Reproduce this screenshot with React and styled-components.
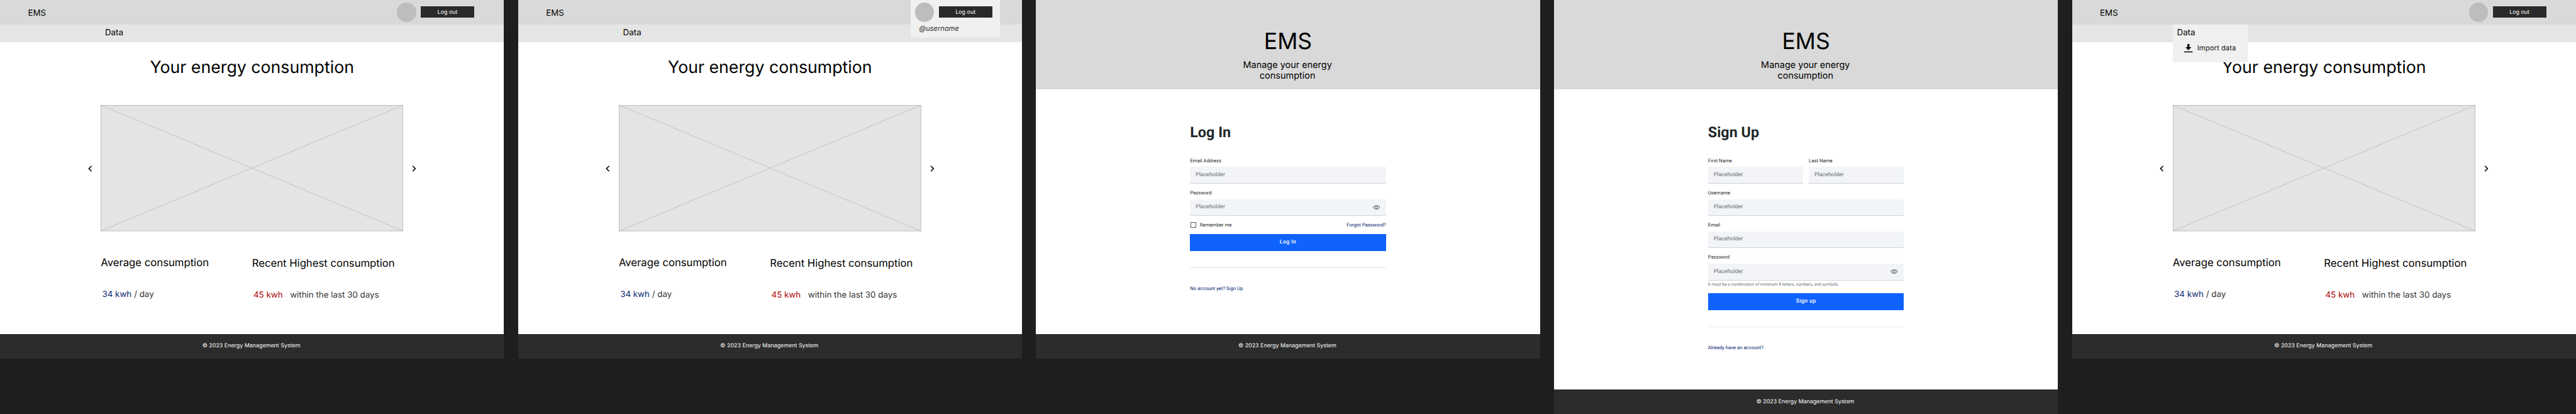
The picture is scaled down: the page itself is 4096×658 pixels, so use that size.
import React from 'react';
import styled, { createGlobalStyle, css } from 'styled-components';

// Screens are designed on a 1440px grid and drawn at a reduced board scale.
const SCALE = 4096 / 7360;
const u = (n) => `${(n * SCALE).toFixed(4)}px`;

const inter = `Inter, "Liberation Sans", sans-serif`;
const roboto = `Roboto, "Liberation Sans", sans-serif`;

const GlobalStyle = createGlobalStyle`
  *, *::before, *::after { box-sizing: border-box; }
  html, body { margin: 0; background: #1e1e1e; }
  body { overflow: hidden; text-rendering: geometricPrecision; }
  h1, h2, p { margin: 0; font-weight: 400; }
  button, input { font: inherit; border: 0; border-radius: 0; padding: 0; margin: 0; text-rendering: inherit; }
`;

const text = (size, line) => css`
  font-size: ${u(size)};
  line-height: ${u(line)};
  white-space: nowrap;
`;

const Board = styled.div`
  display: flex;
  align-items: flex-start;
  gap: ${u(40)};
  width: 4096px;
  height: 658px;
  overflow: hidden;
  background: #1e1e1e;
  font-family: ${inter};
  color: #000;
`;

const Frame = styled.section`
  position: relative;
  display: flex;
  flex-direction: column;
  flex: none;
  width: ${u(1440)};
  height: ${(p) => u(p.$height || 1024)};
  background: #fff;
`;

const Footer = styled.footer`
  display: flex;
  align-items: center;
  justify-content: center;
  height: ${u(70)};
  margin-top: auto;
  padding: 0 ${u(4)} ${u(2)} 0;
  background: #2c2c2c;
  color: #fff;
  ${text(16, 20)}
`;

/* ---------- dashboard ---------- */

const TopBar = styled.header`
  display: flex;
  align-items: center;
  justify-content: space-between;
  height: ${u(70)};
  padding: 0 ${u(85)} 0 ${u(80)};
  background: #d9d9d9;
`;

const Brand = styled.div`
  padding-top: ${u(4)};
  ${text(24, 29)}
`;

const AccountRow = styled.div`
  display: flex;
  align-items: flex-start;
  gap: ${u(13)};
  height: ${u(70)};
  padding-top: ${u(8)};
`;

const Avatar = styled.div`
  width: ${u(55)};
  height: ${u(55)};
  border-radius: 50%;
  background: #bdbdbd;
`;

const LogoutButton = styled.button`
  width: ${u(153)};
  height: ${u(33)};
  margin-top: ${u(10)};
  padding-top: ${u(2.5)};
  background: #2a2a2a;
  color: #fff;
  font-family: ${inter};
  ${text(16, 20)}
`;

const AccountMenu = styled.div`
  position: absolute;
  top: 0;
  right: ${u(63)};
  width: ${u(256)};
  height: ${u(107)};
  padding-left: ${u(13)};
  background: #f0f0f0;
`;

const Username = styled.p`
  padding-left: ${u(12)};
  font-style: italic;
  color: #2c2c2c;
  ${text(20, 24)}
`;

const SubNav = styled.nav`
  display: flex;
  align-items: center;
  height: ${u(50)};
  padding-left: ${u(300)};
  background: #e5e5e5;
`;

const NavItem = styled.div`
  ${text(24, 50)}
`;

const DataMenu = styled.div`
  position: absolute;
  top: ${u(70)};
  left: ${u(288)};
  width: ${u(214)};
  height: ${u(107)};
  padding-left: ${u(12)};
  background: #f0f0f0;
`;

const MenuItem = styled.div`
  display: flex;
  align-items: center;
  gap: ${u(14)};
  height: ${u(24)};
  margin: ${u(6)} 0 0 ${u(20)};
  letter-spacing: ${u(0.2)};
  color: #111;
  ${text(20, 24)}
`;

const Glyph = styled.svg`
  display: block;
  flex: none;
  width: ${(p) => u(p.$w)};
  height: ${(p) => u(p.$h)};
  overflow: visible;
`;

const Title = styled.h1`
  margin-top: ${u(43)};
  text-align: center;
  ${text(48, 58)}
`;

const Carousel = styled.div`
  display: flex;
  align-items: center;
  justify-content: center;
  gap: ${u(25)};
  margin-top: ${u(80)};
`;

const Stats = styled.div`
  display: grid;
  grid-template-columns: 1fr 1fr;
  width: ${u(864)};
  margin: ${u(72)} auto 0;
`;

const Stat = styled.div`
  padding-top: ${(p) => u(p.$drop || 0)};
`;

const StatTitle = styled.h2`
  ${text(30, 36)}
`;

const StatValue = styled.p`
  display: flex;
  gap: ${(p) => u(p.$gap)};
  margin-top: ${u(58)};
  padding-left: ${u(4)};
  color: #333;
  ${text(24, 29)}
`;

const Figure = styled.span`
  color: ${(p) => (p.$tone === 'high' ? '#a80000' : '#001d6c')};
`;

/* ---------- authentication ---------- */

const Hero = styled.header`
  display: flex;
  flex-direction: column;
  align-items: center;
  height: ${u(255)};
  padding-top: ${u(81)};
  background: #d9d9d9;
`;

const HeroTitle = styled.h1`
  ${text(64, 77)}
`;

const HeroText = styled.p`
  width: ${u(270)};
  margin: ${u(13)} ${u(3)} 0 0;
  text-align: center;
  ${text(26, 31)}
  white-space: normal;
`;

const Form = styled.div`
  display: flex;
  flex-direction: column;
  gap: ${u(16)};
  width: ${u(560)};
  margin: ${u(99)} auto 0;
  font-family: ${roboto};
  color: #21272a;
`;

const FormTitle = styled.h2`
  margin-bottom: ${u(32)};
  font-weight: 700;
  ${text(42, 47)}
`;

const FieldRow = styled.div`
  display: grid;
  grid-template-columns: 1fr 1fr;
  gap: ${u(16)};
`;

const FieldBox = styled.div`
  display: flex;
  flex-direction: column;
`;

const Label = styled.label`
  margin-bottom: ${u(8)};
  ${text(14, 20)}
`;

const InputBox = styled.div`
  display: flex;
  align-items: center;
  justify-content: space-between;
  height: ${u(48)};
  padding: 0 ${u(16)};
  border-bottom: 1px solid #d0d4da;
  background: #f2f4f8;
  color: #697077;
  ${text(16, 22)}
`;

const Hint = styled.p`
  margin-top: ${u(4)};
  color: #697077;
  ${text(12, 17)}
`;

const OptionsRow = styled.div`
  display: flex;
  align-items: center;
  justify-content: space-between;
  height: ${u(20)};
  ${text(14, 20)}
`;

const Remember = styled.label`
  display: flex;
  align-items: center;
  gap: ${u(10)};
  padding-left: ${u(2)};
`;

const Checkbox = styled.span`
  width: ${u(16)};
  height: ${u(16)};
  border: 1px solid #5c5c5c;
  background: #fff;
`;

const Link = styled.a`
  color: #001d6c;
  ${text(14, 20)}
`;

const Submit = styled.button`
  height: ${u(48)};
  background: #0f62fe;
  color: #fff;
  font-family: ${roboto};
  font-weight: 500;
  letter-spacing: ${u(0.5)};
  ${text(16, 16)}
`;

const Divider = styled.div`
  height: 1px;
  margin: ${u(31)} 0 ${u(32)};
  background: #e6e7e9;
`;

/* ---------- drawings ---------- */

const Chevron = ({ right }) => (
  <Glyph $w={12} $h={18} viewBox="0 0 12 18">
    <path
      d={right ? 'M2 1.4L9.6 9L2 16.6' : 'M10 1.4L2.4 9L10 16.6'}
      fill="none"
      stroke="#000"
      strokeWidth="2.9"
    />
  </Glyph>
);

const Eye = () => (
  <Glyph $w={24} $h={24} viewBox="0 0 24 24">
    <g fill="none" stroke="#697077" strokeWidth="1.8">
      <path d="M2.9 12C4.4 8.6 7.9 6.9 12 6.9S19.6 8.6 21.1 12C19.6 15.4 16.1 17.1 12 17.1S4.4 15.4 2.9 12Z" />
      <circle cx="12" cy="12" r="3.1" />
    </g>
  </Glyph>
);

const DownloadIcon = () => (
  <Glyph $w={24} $h={24} viewBox="0 0 24 24">
    <path d="M9 0h6v9h5.7L12 17.7L3.3 9H9zM0 21h24v3H0z" fill="#000" />
  </Glyph>
);

const ImagePlaceholder = () => (
  <Glyph $w={864} $h={360} viewBox="0 0 864 360">
    <rect x="0.5" y="0.5" width="863" height="359" fill="#e4e4e4" stroke="#999" />
    <path d="M0 0L864 360M864 0L0 360" stroke="#a6a6a6" fill="none" />
  </Glyph>
);

/* ---------- screens ---------- */

const PageFooter = () => <Footer>© 2023 Energy Management System</Footer>;

const Account = () => (
  <AccountRow>
    <Avatar />
    <LogoutButton>Log out</LogoutButton>
  </AccountRow>
);

const Dashboard = ({ menu }) => (
  <Frame>
    <TopBar>
      <Brand>EMS</Brand>
      {menu !== 'account' && <Account />}
    </TopBar>
    <SubNav>{menu !== 'data' && <NavItem>Data</NavItem>}</SubNav>
    <Title>Your energy consumption</Title>
    <Carousel>
      <Chevron />
      <ImagePlaceholder />
      <Chevron right />
    </Carousel>
    <Stats>
      <Stat>
        <StatTitle>Average consumption</StatTitle>
        <StatValue $gap={7}>
          <Figure>34 kwh</Figure>
          <span>/ day</span>
        </StatValue>
      </Stat>
      <Stat $drop={2}>
        <StatTitle>Recent Highest consumption</StatTitle>
        <StatValue $gap={21}>
          <Figure $tone="high">45 kwh</Figure>
          <span>within the last 30 days</span>
        </StatValue>
      </Stat>
    </Stats>
    <PageFooter />
    {menu === 'account' && (
      <AccountMenu>
        <Account />
        <Username>@username</Username>
      </AccountMenu>
    )}
    {menu === 'data' && (
      <DataMenu>
        <NavItem>Data</NavItem>
        <MenuItem>
          <DownloadIcon />
          <span>Import data</span>
        </MenuItem>
      </DataMenu>
    )}
  </Frame>
);

const Field = ({ label, secret, hint }) => (
  <FieldBox>
    <Label>{label}</Label>
    <InputBox>
      <span>Placeholder</span>
      {secret && <Eye />}
    </InputBox>
    {hint && <Hint>{hint}</Hint>}
  </FieldBox>
);

const AuthScreen = ({ title, height, children }) => (
  <Frame $height={height}>
    <Hero>
      <HeroTitle>EMS</HeroTitle>
      <HeroText>Manage your energy consumption</HeroText>
    </Hero>
    <Form>
      <FormTitle>{title}</FormTitle>
      {children}
    </Form>
    <PageFooter />
  </Frame>
);

const LogInScreen = () => (
  <AuthScreen title="Log In">
    <Field label="Email Address" />
    <Field label="Password" secret />
    <OptionsRow>
      <Remember>
        <Checkbox />
        <span>Remember me</span>
      </Remember>
      <Link>Forgot Password?</Link>
    </OptionsRow>
    <Submit>Log In</Submit>
    <Divider />
    <Link>No account yet? Sign Up</Link>
  </AuthScreen>
);

const SignUpScreen = () => (
  <AuthScreen title="Sign Up" height={1183}>
    <FieldRow>
      <Field label="First Name" />
      <Field label="Last Name" />
    </FieldRow>
    <Field label="Username" />
    <Field label="Email" />
    <Field
      label="Password"
      secret
      hint="It must be a combination of minimum 8 letters, numbers, and symbols."
    />
    <Submit>Sign up</Submit>
    <Divider />
    <Link>Already have an account?</Link>
  </AuthScreen>
);

export default function App() {
  return (
    <>
      <GlobalStyle />
      <Board>
        <Dashboard />
        <Dashboard menu="account" />
        <LogInScreen />
        <SignUpScreen />
        <Dashboard menu="data" />
      </Board>
    </>
  );
}
